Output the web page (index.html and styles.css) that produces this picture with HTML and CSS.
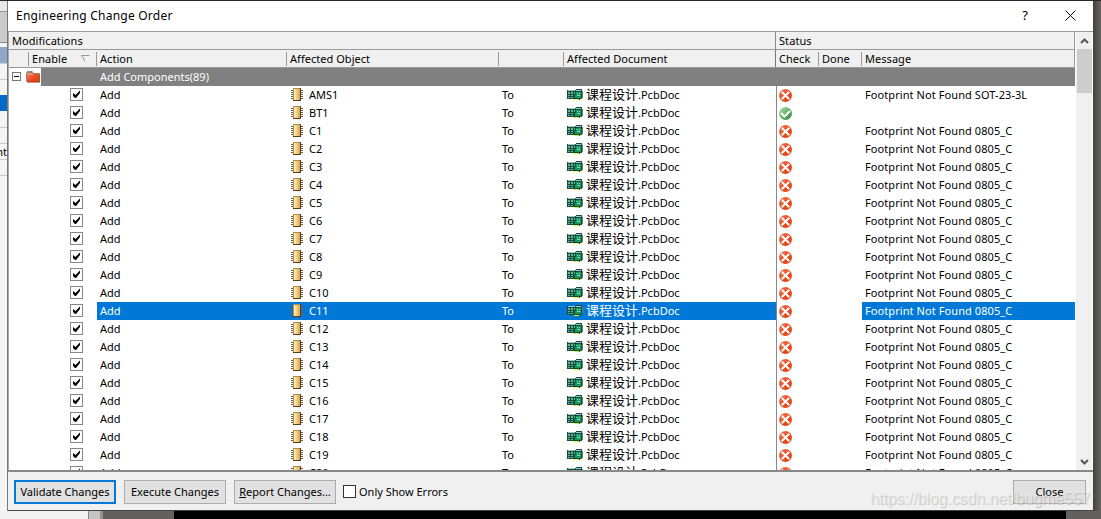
FILE: index.html
```
<!DOCTYPE html>
<html lang="en">
<head>
    <meta charset="UTF-8">
    <meta name="viewport" content="width=device-width, initial-scale=1.0">
    <title>Engineering Change Order</title>
    <link rel="stylesheet" href="styles.css">
</head>
<body>
    <!-- shared icons -->
    <svg class="defs" width="0" height="0">
        <defs>
            <linearGradient id="gold" x1="0" x2="1"><stop offset="0" stop-color="#fff3c0"/><stop offset="1" stop-color="#dfa53c"/></linearGradient>
            <linearGradient id="red" x1="0" x2="1" y2="1"><stop offset="0" stop-color="#f08060"/><stop offset="0.5" stop-color="#ee4c20"/><stop offset="1" stop-color="#e04010"/></linearGradient>
            <linearGradient id="green" x1="0" x2="1" y2="1"><stop offset="0" stop-color="#b5e0b0"/><stop offset="0.5" stop-color="#6cb46e"/><stop offset="1" stop-color="#267c34"/></linearGradient>
            <symbol id="chip" viewBox="0 0 12 13">
                <path d="M0 2.5h12M0 4.5h12M0 6.5h12M0 8.5h12M0 10.5h12" stroke="#6b604b"/>
                <rect x="2" width="8" height="13" fill="#5a3928"/>
                <path d="M2 0h7v1H3v11H2z" fill="#a98c50"/>
                <rect x="3" y="1" width="6" height="11" fill="url(#gold)"/>
            </symbol>
            <symbol id="pcb" viewBox="0 0 16 12">
                <path d="M0 1h9V0h6v10h-2v1H7v-1H0z" fill="#174f3f"/>
                <path d="M1 1h7v1H1zM9 1h5v1H9z" fill="#9fc6d8"/>
                <path d="M1 3h2v2H1zM4 3h2v2H4zM7 3h1v2H7zM1 6h2v1H1zM4 6h2v1H4zM1 8h2v1H1zM4 8h2v1H4z" fill="#62b592"/>
                <path d="M9 3h5v6H8V6h1z" fill="#119a63"/>
                <path d="M10 4h1v1h-1zM12 4h1v1h-1zM10 6h3v1h-3z" fill="#8bd9aa"/>
                <path d="M7 10h5v1H7z" fill="#e5ee22"/>
                <path d="M15 2h1v7h-1z" fill="#77785a"/>
            </symbol>
            <symbol id="bad" viewBox="0 0 13 13">
                <circle cx="6.5" cy="6.5" r="6.5" fill="url(#red)"/>
                <path d="M2.7 2.7l7.6 7.6M10.3 2.7L2.7 10.3" stroke="#fff" stroke-width="2"/>
            </symbol>
            <symbol id="good" viewBox="0 0 13 13">
                <circle cx="6.5" cy="6.5" r="6.5" fill="url(#green)"/>
                <path d="M2 6l3.500 3.500L11 4" fill="none" stroke="#fff" stroke-width="2"/>
            </symbol>
            <symbol id="tick" viewBox="0 0 13 13">
                <rect x="0.5" y="0.5" width="12" height="12" fill="#fff" stroke="#888"/>
                <path d="M3 5v3l2 2h1l4-5V2.500L5.500 7z" fill="#000"/>
            </symbol>
        </defs>
    </svg>

    <div class="desktop">
        <div class="strip-top"></div>
        <div class="middle">
            <div class="behind-left">
                <div class="b1"></div><div class="b2"></div><div class="b3"></div><div class="b4"></div>
                <div class="b5"></div><div class="b6"></div><div class="b7"></div><div class="b8">nt</div><div class="b9"></div>
            </div>
            <div class="dialog">
                <div class="titlebar">
                    <span class="title">Engineering Change Order</span>
                    <span class="help">?</span>
                    <svg width="11" height="11" viewBox="0 0 11 11"><path d="M0.500 0.500l10 10M10.500 0.500l-10 10" stroke="#111"/></svg>
                </div>
                <div class="list">
                    <div class="table">
                        <div class="bands">
                            <div class="band band-mod">Modifications</div>
                            <div class="band">Status</div>
                        </div>
                        <div class="cols head">
                            <div class="h-tree"><span class="stub"></span><span class="enable">Enable</span><svg width="9" height="8" viewBox="0 0 9 8"><path d="M0 0.500h8.500M1 1l3.500 6" stroke="#999" fill="none"/><path d="M8 1L4.500 7" stroke="#fff"/></svg></div>
                            <div>Action</div>
                            <div>Affected Object</div>
                            <div></div>
                            <div class="h-doc">Affected Document</div>
                            <div>Check</div>
                            <div>Done</div>
                            <div class="last">Message</div>
                        </div>
                        <div class="group">
                            <div class="tree">
                                <svg width="9" height="9" viewBox="0 0 9 9"><rect x="0.500" y="0.500" width="8" height="8" fill="#fff" stroke="#777"/><path d="M2 4.500h5" stroke="#000"/></svg>
                                <svg width="14" height="12" viewBox="0 0 14 12"><path d="M0 2l1-1V0h5l1 1v1h7v9H1L0 10z" fill="#9b8370"/><path d="M1 3h12v8H1z" fill="url(#red)"/><path d="M7 3l-1 1H1V2h5z" fill="#f19276"/><path d="M1 11h13V4" fill="none" stroke="#96351d"/></svg>
                            </div>
                            <div class="group-name">Add Components(89)</div>
                        </div>
                        <div id="rows"></div>
                    </div>
                    <div class="scrollbar">
                        <svg width="9" height="6" viewBox="0 0 9 6"><path d="M1 5l3.500-3.500L8 5" fill="none" stroke="#555" stroke-width="2"/></svg>
                        <div class="thumb"></div>
                        <svg class="down" width="9" height="6" viewBox="0 0 9 6"><path d="M1 1l3.500 3.500L8 1" fill="none" stroke="#555" stroke-width="2"/></svg>
                    </div>
                </div>
                <div class="footer">
                    <button class="default">Validate Changes</button>
                    <button>Execute Changes</button>
                    <button><u>R</u>eport Changes...</button>
                    <span class="box"></span>
                    <span class="only">Only Show Errors</span>
                    <button class="close">Close</button>
                </div>
            </div>
            <div class="behind-right"></div>
        </div>
        <div class="strip-bottom">
            <div class="s1"></div><div class="s2"></div><div class="s3"></div><div class="s4"></div><div class="s5"></div>
        </div>
    </div>
    <div class="watermark">https://blog.csdn.net/bugme557</div>

    <script>
        let names = ["AMS1", "BT1"];
        for (let i = 1; i <= 20; i++) names.push("C" + i);

        function icon(id, w, h) {
            return `<svg width="${w}" height="${h}"><use href="#${id}"/></svg>`;
        }

        document.getElementById("rows").innerHTML = names.map(name => {
            let ok = name === "BT1";
            let message = ok ? "" : "Footprint Not Found " + (name === "AMS1" ? "SOT-23-3L" : "0805_C");
            return `<div class="cols row ${name === "C11" ? "selected" : ""}">
                <div class="tick">${icon("tick", 13, 13)}</div>
                <div class="hl">Add</div>
                <div class="hl object">${icon("chip", 12, 13)}<span>${name}</span></div>
                <div class="hl">To</div>
                <div class="hl doc">${icon("pcb", 16, 12)}<span class="cjk">课程设计</span><span class="ext">.PcbDoc</span></div>
                <div class="check">${icon(ok ? "good" : "bad", 13, 13)}</div>
                <div></div>
                <div class="hl message">${message}</div>
            </div>`;
        }).join("");
    </script>
</body>
</html>
```
FILE: styles.css
```
* {box-sizing: border-box;}
body {margin: 0; width: 1101px; height: 519px; overflow: hidden; font-family: "Noto Sans", "Noto Sans CJK SC", sans-serif; font-size: 11px; color: #000; white-space: nowrap;}
svg {display: block; flex: none;}
.defs {position: absolute;}
.desktop {height: 519px; display: flex; flex-direction: column;}
.strip-top {height: 1px; background: #2a2526;}
.middle {height: 510px; display: flex;}

/* windows behind the dialog */
.behind-left {width: 8px; background: #f4f4f4; border-right: 1px solid #777; overflow: hidden;}
.b1 {height: 11px; background: #e8e8e8; border-bottom: 1px solid #999;}
.b2 {height: 31px; background: #cbcbcb; border-bottom: 1px solid #888;}
.b3 {height: 4px;}
.b4 {height: 17px; background: #8ea8c8; border-bottom: 1px solid #ccc;}
.b5 {height: 16px; border-bottom: 1px solid #ccc;}
.b6 {height: 15px;}
.b7 {height: 16px; background: #006cc8;}
.b8 {height: 49px; padding-top: 33px; direction: rtl; line-height: 16px; border-bottom: 1px solid #ccc; background: linear-gradient(#ccc, #ccc) 0 16px / 100% 1px no-repeat, linear-gradient(#ccc, #ccc) 0 32px / 100% 1px no-repeat;}
.b9 {height: 16px; border-bottom: 1px solid #ccc;}
.behind-right {flex: 1; background: linear-gradient(90deg, #474443, #646160 6px);}
.strip-bottom {height: 8px; display: flex; background: #64605f;}
.s1 {width: 89px; background: #f2f2f2; border-right: 1px solid #888;}
.s2 {width: 11px; background: #c4c4c4;}
.s3 {width: 3px; background: #979393;}
.s4 {width: 71px;}
.s5 {width: 892px; background: #000;}

.dialog {width: 1086px; background: #f0f0f0; border-right: 1px solid #444; border-bottom: 1px solid #444; display: flex; flex-direction: column;}
.titlebar {height: 30px; background: #fff; display: flex; align-items: center; padding: 0 17px 2px 8px;}
.title {flex: 1; font-size: 12px; letter-spacing: 0.23px;}
.help {font-size: 13px; margin-right: 37px;}

/* change list */
.list {height: 441px; display: flex; border-top: 1px solid #999; border-bottom: 2px solid #888; border-left: 1px solid #aaa; background: #fff;}
.table {width: 1066px; height: 438px; overflow: hidden;}
.bands {height: 18px; display: flex; border-bottom: 1px solid #999; background: #f0f0f0; border-right: 1px solid #999; letter-spacing: 0.07px;}
.band {padding-left: 3px; line-height: 18px;}
.band-mod {width: 767px; border-right: 1px solid #888;}
.cols {display: grid; grid-template-columns: 88px 190px 212px 65px 212px 43px 43px 213px;}
.head {height: 18px; background: #f0f0f0; border-bottom: 1px solid #999; letter-spacing: 0.04px;}
.head > div {padding-left: 3px; border-right: 1px solid #999; height: 14px; margin-top: 2px; line-height: 13px;}
.head .h-tree {display: flex; align-items: center; padding: 0 6px 0 0;}
.head .h-doc {height: 17px; margin-top: 0; line-height: 17px; border-color: #777;}
.head .last {height: 17px; margin-top: 0; line-height: 17px;}
.stub {width: 20px; height: 14px; border-right: 1px solid #999;}
.enable {flex: 1; padding: 0 0 2px 3px;}
.group {height: 18px; display: flex;}
.tree {width: 32px; display: flex; align-items: center; padding: 0 1px 1px 3px; justify-content: space-between;}
.group-name {flex: 1; background: #808080; color: #fff; padding-left: 59px; line-height: 18px;}
.row {height: 18px; line-height: 18px;}
.row .hl {padding-left: 3px; height: 18px;}
.tick {padding: 2px 0 0 61px;}
.row .object {display: flex; padding-left: 4px;}
.object svg {margin: 2px 6px 0 0;}
.row .doc {display: flex;}
.doc svg {margin: 3px 3px 0 0;}
.cjk {font-family: "Noto Sans CJK SC", sans-serif; font-size: 13px; line-height: 16px;}
.check {padding: 3px 0 0 2px; border-left: 1px solid #888;}
.row .message {letter-spacing: 0.08px;}
.selected .hl {background: #0078d7; color: #fff;}

.scrollbar {flex: none; width: 17px; height: 438px; margin-left: 1px; background: #f0f0f0; border-right: 1px solid #fff; display: flex; flex-direction: column; align-items: center; padding-top: 6px;}
.thumb {width: 15px; height: 44px; margin-top: 5px; background: #cdcdcd;}
.down {margin: auto 0 5px;}

.footer {flex: 1; display: flex; align-items: center; padding: 2px 7px 0 6px;}
button {font: inherit; width: 102px; height: 24px; padding: 0 0 1px; margin-right: 8px; background: #e1e1e1; border: 1px solid #adadad; color: #000;}
.default {border: 2px solid #0078d7;}
.box {width: 13px; height: 13px; border: 1px solid #333; background: #fff; margin: 0 3px 1px -1px;}
.only {padding-bottom: 2px;}
.close {width: 73px; margin: 0 0 0 auto;}

.watermark {position: absolute; left: 870px; top: 490px; font-family: "Liberation Sans", Arial, sans-serif; font-size: 16px; letter-spacing: -0.1px; color: rgba(255, 255, 255, 0.35); text-shadow: 1px 1px 1px rgba(120, 120, 120, 0.35);}
```
